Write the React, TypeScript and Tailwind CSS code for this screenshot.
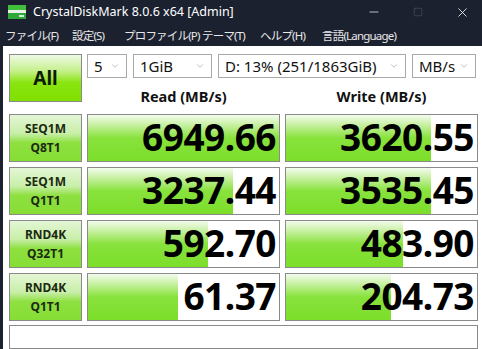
import { ChevronDown, Minus, Square, X } from 'lucide-react';

// ===================================
// CrystalDiskMark window
// ===================================

const rows = [
  { l1: 'SEQ1M', l2: 'Q8T1', read: '6949.66', readPct: 100, write: '3620.55', writePct: 76 },
  { l1: 'SEQ1M', l2: 'Q1T1', read: '3237.44', readPct: 76, write: '3535.45', writePct: 76 },
  { l1: 'RND4K', l2: 'Q32T1', read: '592.70', readPct: 63, write: '483.90', writePct: 61 },
  { l1: 'RND4K', l2: 'Q1T1', read: '61.37', readPct: 47, write: '204.73', writePct: 55 },
];

const menu = [
  { t: 'ファイル(F)', w: 'w-[67px]' },
  { t: '設定(S)', w: 'w-[52px]' },
  { t: 'プロファイル(P)', w: 'w-[78px]' },
  { t: 'テーマ(T)', w: 'w-[58px]' },
  { t: 'ヘルプ(H)', w: 'w-[62px]' },
  { t: '言語(Language)', w: 'w-[90px]' },
];

function Combo({ value, className }: { value: string; className: string }) {
  return (
    <div
      className={`flex h-[24px] items-center justify-between border border-[#a8a8a8] bg-white pl-[6px] pr-[6px] text-[15px] text-[#111] ${className}`}
    >
      <span className="leading-none">{value}</span>
      <ChevronDown className="h-[10px] w-[10px] text-[#888]" strokeWidth={1.3} />
    </div>
  );
}

function Result({ value, pct }: { value: string; pct: number }) {
  return (
    <div className="relative h-[48px] border border-[#8a8a8a] bg-white">
      <div
        className="absolute inset-y-0 left-0 bg-[linear-gradient(to_bottom,#f4fcee_0%,#c6f0a0_22%,#88e23c_50%,#7cde2a_100%)]"
        style={{ width: `${pct}%` }}
      />
      <div className="relative flex h-full items-center justify-end pr-[3px] pb-[3px] text-[37px] font-bold leading-none tracking-[-0.5px] text-black">
        {value}
      </div>
    </div>
  );
}

function Label({ l1, l2 }: { l1: string; l2: string }) {
  return (
    <div className="flex h-[48px] flex-col items-center justify-center gap-[3px] border border-[#8a8a8a] bg-[linear-gradient(to_bottom,#e4f6d6_0%,#c8eea8_40%,#8ee040_60%,#86de34_100%)] text-[12px] font-bold leading-[16px] text-[#1c2a12]">
      <span>{l1}</span>
      <span>{l2}</span>
    </div>
  );
}

export default function App() {
  return (
    <div className="flex h-[349px] w-[482px] flex-col overflow-hidden font-['Noto_Sans','Noto_Sans_CJK_JP',sans-serif]">
      {/* Title bar */}
      <div className="flex h-[27px] items-center bg-[#1c2130] text-white">
        <svg width="18" height="14" viewBox="0 0 18 14" className="ml-[8px]">
          <rect x="0" y="0" width="18" height="5" fill="#3fbf3a" />
          <rect x="0" y="5" width="18" height="3" fill="#e8f0e8" />
          <rect x="0" y="8" width="18" height="6" fill="#2fa83a" />
          <rect x="11" y="10" width="5" height="2" fill="#d8f0d8" />
        </svg>
        <span className="ml-[7px] text-[12.5px]">CrystalDiskMark 8.0.6 x64 [Admin]</span>
        <div className="-mr-[2px] ml-auto flex items-center">
          <div className="flex w-[45px] justify-center">
            <Minus className="h-[14px] w-[14px]" strokeWidth={1.2} />
          </div>
          <div className="flex w-[44px] justify-center">
            <Square className="h-[10px] w-[10px] text-[#5a606c]" strokeWidth={1.2} />
          </div>
          <div className="flex w-[44px] justify-center">
            <X className="h-[15px] w-[15px]" strokeWidth={1.3} />
          </div>
        </div>
      </div>

      {/* Menu bar */}
      <div className="flex h-[23px] items-center bg-[#1c2130] pl-[5px] text-[11.5px] tracking-[-0.8px] text-[#e8e8e8]">
        {menu.map((m) => (
          <span key={m.t} className={`${m.w} shrink-0 whitespace-nowrap`}>
            {m.t}
          </span>
        ))}
      </div>

      {/* Body */}
      <div className="flex flex-1 flex-col border-l-[3px] border-[#1c2130] bg-white pl-[6px] pr-[4px] pt-[8px]">
        <div className="grid grid-cols-[73px_193px_193px] gap-x-[5px]">
          <div className="flex h-[48px] items-center justify-center border border-[#8a8a8a] bg-[linear-gradient(to_bottom,#eefae6_0%,#c4f08a_35%,#8ae410_60%,#80e000_100%)] text-[19px] font-bold text-[#0e1a06]">
            All
          </div>
          <div className="col-span-2 flex flex-col">
            <div className="flex gap-[6px]">
              <Combo value="5" className="w-[40px]" />
              <Combo value="1GiB" className="w-[79px]" />
              <Combo value="D: 13% (251/1863GiB)" className="w-[188px]" />
              <Combo value="MB/s" className="w-[64px]" />
            </div>
            <div className="grid flex-1 grid-cols-2 gap-x-[5px] pt-[8px] text-[14.5px] font-bold text-[#111]">
              <div className="flex items-center justify-center">Read (MB/s)</div>
              <div className="flex items-center justify-center">Write (MB/s)</div>
            </div>
          </div>
        </div>

        <div className="mt-[6px] grid grid-cols-[73px_193px_193px] gap-x-[5px] gap-y-[5px]">
          {rows.map((r) => (
            <div key={r.l1 + r.l2} className="contents">
              <Label l1={r.l1} l2={r.l2} />
              <Result value={r.read} pct={r.readPct} />
              <Result value={r.write} pct={r.writePct} />
            </div>
          ))}
        </div>

        <div className="mt-[4px] h-[24px] w-[469px] border border-[#8a8a8a] bg-white" />
      </div>
    </div>
  );
}
